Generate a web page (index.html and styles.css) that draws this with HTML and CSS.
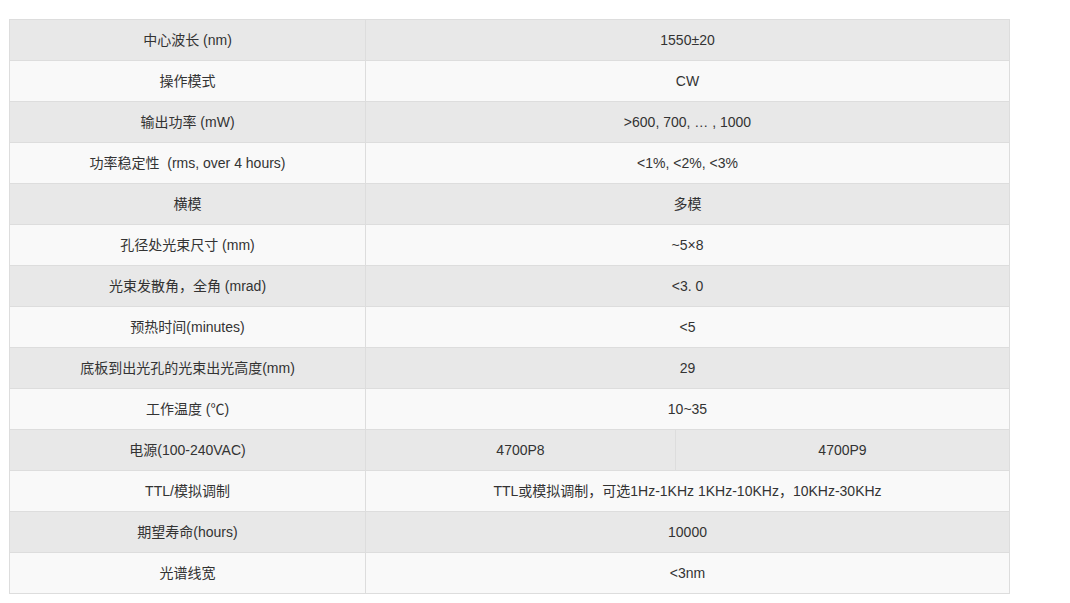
FILE: index.html
```html
<!DOCTYPE html>
<html lang="zh">
<head>
<meta charset="utf-8">
<link rel="stylesheet" href="styles.css">
</head>
<body>
<table class="spec">
  <colgroup>
    <col class="c1">
    <col class="c2">
    <col class="c3">
  </colgroup>
  <tbody>
    <tr><td>中心波长 (nm)</td><td colspan="2">1550±20</td></tr>
    <tr><td>操作模式</td><td colspan="2">CW</td></tr>
    <tr><td>输出功率 (mW)</td><td colspan="2">&gt;600, 700, … , 1000</td></tr>
    <tr><td>功率稳定性&nbsp;&nbsp;(rms, over 4 hours)</td><td colspan="2">&lt;1%, &lt;2%, &lt;3%</td></tr>
    <tr><td>横模</td><td colspan="2">多模</td></tr>
    <tr><td>孔径处光束尺寸 (mm)</td><td colspan="2">~5×8</td></tr>
    <tr><td>光束发散角，全角 (mrad)</td><td colspan="2">&lt;3. 0</td></tr>
    <tr><td>预热时间(minutes)</td><td colspan="2">&lt;5</td></tr>
    <tr><td>底板到出光孔的光束出光高度(mm)</td><td colspan="2">29</td></tr>
    <tr><td>工作温度 (℃)</td><td colspan="2">10~35</td></tr>
    <tr><td>电源(100-240VAC)</td><td>4700P8</td><td>4700P9</td></tr>
    <tr><td>TTL/模拟调制</td><td colspan="2">TTL或模拟调制，可选1Hz-1KHz 1KHz-10KHz，10KHz-30KHz</td></tr>
    <tr><td>期望寿命(hours)</td><td colspan="2">10000</td></tr>
    <tr><td>光谱线宽</td><td colspan="2">&lt;3nm</td></tr>
  </tbody>
</table>
</body>
</html>
```
FILE: styles.css
```css
html, body {
  margin: 0;
  padding: 0;
  background: #fff;
}
body {
  padding: 19px 0 0 9px;
  font-family: "Liberation Sans", Arial, "Noto Sans CJK SC", sans-serif;
  font-size: 14px;
  color: #333;
}
.spec {
  border-collapse: collapse;
  table-layout: fixed;
  width: 1000px;
}
.spec .c1 { width: 356px; }
.spec .c2 { width: 310px; }
.spec .c3 { width: 334px; }
.spec td {
  border: 1px solid #ddd;
  height: 41px;
  padding: 0 8px;
  text-align: center;
  vertical-align: middle;
  line-height: 20px;
  box-sizing: border-box;
}
.spec tr:nth-child(odd) td { background: #e8e8e8; }
.spec tr:nth-child(even) td { background: #f9f9f9; }
```
